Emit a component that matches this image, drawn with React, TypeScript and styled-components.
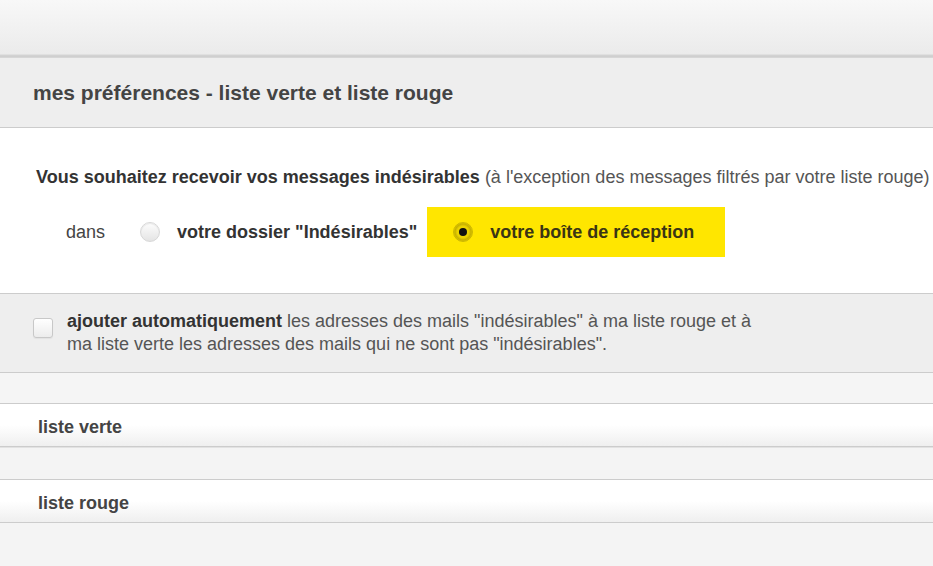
import React from 'react';
import styled, { createGlobalStyle } from 'styled-components';

const GlobalStyle = createGlobalStyle`
  html, body {
    margin: 0;
    padding: 0;
    background: #f4f4f4;
    font-family: "Liberation Sans", Arial, sans-serif;
    color: #333;
  }
`;

// bandeau du haut
const TopBar = styled.div`
  height: 54px;
  background: linear-gradient(#f8f8f8, #ebebeb);
  border-bottom: 1px solid #e0e0e0;
  box-shadow: 0 1px 0 #d2d2d2, 0 2px 0 #cfcfcf, 0 3px 0 #d6d6d6;
`;

const Header = styled.div`
  margin-top: 3px;
  height: 69px;
  background: #eeeeee;
  border-bottom: 1px solid #cccccc;
  display: flex;
  align-items: center;
  padding-left: 33px;
`;

const Title = styled.h1`
  margin: 0;
  font-size: 21px;
  font-weight: bold;
  color: #444;
`;

const WhiteSection = styled.div`
  background: #fff;
  padding: 39px 0 36px 36px;
  border-bottom: 1px solid #cccccc;
`;

const Question = styled.p`
  margin: 0;
  font-size: 18px;
  line-height: 21px;
  color: #555;
  white-space: nowrap;
  b {
    color: #333;
  }
`;

const ChoiceRow = styled.div`
  display: flex;
  align-items: center;
  margin-top: 19px;
  height: 50px;
  padding-left: 30px;
`;

const Dans = styled.span`
  font-size: 18px;
  color: #444;
  margin-right: 35px;
`;

const Choice = styled.label<{ selected?: boolean }>`
  display: flex;
  align-items: center;
  height: 50px;
  padding: 0 ${(p) => (p.selected ? '31px' : '10px')} 0 ${(p) => (p.selected ? '26px' : '0')};
  background: ${(p) => (p.selected ? '#ffe600' : 'transparent')};
  font-size: 18px;
  font-weight: bold;
  color: ${(p) => (p.selected ? '#3a3514' : '#333')};
  cursor: pointer;
`;

const Radio = styled.span<{ checked?: boolean }>`
  width: 20px;
  height: 20px;
  border-radius: 50%;
  margin-right: 17px;
  box-sizing: border-box;
  display: flex;
  align-items: center;
  justify-content: center;
  border: 1px solid ${(p) => (p.checked ? '#cdb800' : '#d8d8d8')};
  background: ${(p) =>
    p.checked
      ? 'radial-gradient(circle, #ecd400 0 45%, #c8b200 62%, #e8d000 80%, #f5de00 100%)'
      : 'linear-gradient(#fdfdfd, #e4e4e4)'};
  box-shadow: ${(p) => (p.checked ? 'none' : 'inset 0 1px 1px rgba(0,0,0,0.08)')};
  &::after {
    content: '';
    display: ${(p) => (p.checked ? 'block' : 'none')};
    width: 8px;
    height: 8px;
    border-radius: 50%;
    background: #111;
  }
`;

const GreySection = styled.div`
  background: #eeeeee;
  border-bottom: 1px solid #cccccc;
  padding: 16px 0 16px 33px;
  display: flex;
  align-items: flex-start;
`;

const Checkbox = styled.span`
  flex: none;
  width: 20px;
  height: 20px;
  box-sizing: border-box;
  margin-top: 8px;
  margin-right: 14px;
  border: 1px solid #c8c8c8;
  border-radius: 3px;
  background: linear-gradient(#ffffff, #ececec);
  box-shadow: 0 1px 1px rgba(0,0,0,0.05);
`;

const AutoText = styled.p`
  margin: 0;
  font-size: 18px;
  line-height: 23px;
  color: #555;
  width: 700px;
  b {
    color: #333;
  }
`;

const Spacer = styled.div`
  height: 30px;
  background: #f5f5f5;
  border-bottom: 1px solid #cccccc;
`;

const ListBox = styled.div`
  height: 43px;
  box-sizing: border-box;
  padding: 4px 0 0 38px;
  background: linear-gradient(#ffffff 0%, #ffffff 50%, #efefef 100%);
  border-bottom: 1px solid #cccccc;
  box-shadow: 0 1px 0 #e2e2e2;
  display: flex;
  align-items: center;
  font-size: 18px;
  font-weight: bold;
  color: #444;
`;

const Gap = styled.div`
  height: 31px;
  margin-top: 1px;
  background: #f4f4f4;
  border-bottom: 1px solid #cccccc;
`;

const App = () => {
  return (
    <>
      <GlobalStyle />
      <TopBar />
      <Header>
        <Title>mes préférences - liste verte et liste rouge</Title>
      </Header>
      <WhiteSection>
        <Question>
          <b>Vous souhaitez recevoir vos messages indésirables</b> (à l'exception des messages filtrés par votre liste rouge)
        </Question>
        <ChoiceRow>
          <Dans>dans</Dans>
          <Choice>
            <Radio />
            votre dossier "Indésirables"
          </Choice>
          <Choice selected>
            <Radio checked />
            votre boîte de réception
          </Choice>
        </ChoiceRow>
      </WhiteSection>
      <GreySection>
        <Checkbox />
        <AutoText>
          <b>ajouter automatiquement</b> les adresses des mails "indésirables" à ma liste rouge et à ma liste verte les adresses des mails qui ne sont pas "indésirables".
        </AutoText>
      </GreySection>
      <Spacer />
      <ListBox>liste verte</ListBox>
      <Gap />
      <ListBox>liste rouge</ListBox>
    </>
  );
};

export default App;
